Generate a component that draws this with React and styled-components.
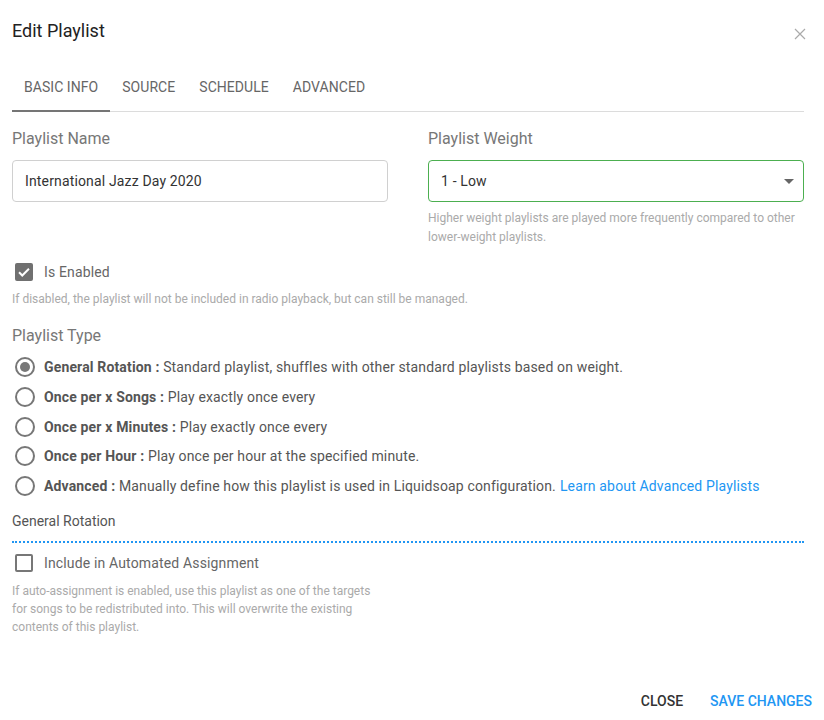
import React, { useState } from 'react';
import styled, { createGlobalStyle } from 'styled-components';

const GlobalStyle = createGlobalStyle`
  body {
    margin: 0;
    background: #fff;
    font-family: Roboto, "Liberation Sans", sans-serif;
    color: #555;
  }
  * { box-sizing: border-box; }
`;

const blue = '#2196f3';

const Dialog = styled.div`
  width: 824px;
  height: 720px;
  display: flex;
  flex-direction: column;
`;

const Header = styled.div`
  display: flex;
  justify-content: space-between;
  align-items: flex-start;
  padding: 20px 18px 0 12px;
  height: 64px;
`;

const Title = styled.h2`
  margin: 0;
  font-size: 18px;
  font-weight: 400;
  color: #222;
  line-height: 22px;
`;

const CloseX = styled.button`
  border: 0;
  background: none;
  padding: 0;
  margin-top: 8px;
  width: 12px;
  height: 12px;
  cursor: pointer;
  display: flex;
`;

const Body = styled.div`
  padding: 0 20px 0 12px;
  flex: 1;
`;

const Tabs = styled.div`
  display: flex;
  border-bottom: 1px solid #dcdcdc;
  height: 48px;
`;

const Tab = styled.div`
  padding: 0 12px;
  height: 48px;
  display: flex;
  align-items: center;
  font-size: 14px;
  color: #666;
  letter-spacing: 0.05px;
  border-bottom: 2px solid ${(p) => (p.active ? '#757575' : 'transparent')};
  margin-bottom: -1px;
`;

const Columns = styled.div`
  display: grid;
  grid-template-columns: 376px 376px;
  column-gap: 40px;
  margin-top: 17px;
`;

const Field = styled.div`
  display: flex;
  flex-direction: column;
`;

const Label = styled.div`
  font-size: 16px;
  color: #777;
  line-height: 20px;
  margin-bottom: ${(p) => p.gap || 11}px;
`;

const Box = styled.div`
  height: 42px;
  border: ${(p) => (p.focused ? '1.5px solid #4caf50' : '1px solid #d0d0d0')};
  border-radius: 4px;
  display: flex;
  align-items: center;
  justify-content: space-between;
  padding: 0 12px;
  font-size: 14px;
  letter-spacing: 0.15px;
  color: #333;
`;

const Caret = styled.span`
  width: 0;
  height: 0;
  border-left: 5px solid transparent;
  border-right: 5px solid transparent;
  border-top: 5px solid #666;
  margin-right: -3px;
`;

const Hint = styled.div`
  font-size: 12px;
  color: #aaa;
  line-height: ${(p) => p.lh || 19}px;
  margin-top: ${(p) => p.top || 6}px;
  max-width: ${(p) => (p.narrow ? '362px' : 'none')};
`;

const CheckRow = styled.label`
  display: flex;
  align-items: center;
  gap: 11px;
  padding-left: 3px;
  font-size: 14px;
  letter-spacing: 0.15px;
  color: #666;
  height: 20px;
  margin-top: ${(p) => p.top || 0}px;
`;

const CheckBox = styled.span`
  width: 18px;
  height: 18px;
  border-radius: 2px;
  display: flex;
  align-items: center;
  justify-content: center;
  background: ${(p) => (p.checked ? '#707070' : '#fff')};
  border: ${(p) => (p.checked ? 'none' : '2px solid #777')};
`;

const Section = styled.div`
  margin-top: 17px;
`;

const RadioList = styled.div`
  display: flex;
  flex-direction: column;
  gap: 9.75px;
`;

const RadioRow = styled.label`
  display: flex;
  align-items: center;
  gap: 9px;
  padding-left: 3px;
  font-size: 14px;
  letter-spacing: 0.15px;
  color: #555;
  height: 20px;
  white-space: nowrap;
`;

const RadioCircle = styled.span`
  width: 20px;
  height: 20px;
  border-radius: 50%;
  border: 2px solid #777;
  display: flex;
  align-items: center;
  justify-content: center;
  &::after {
    content: '';
    width: 10px;
    height: 10px;
    border-radius: 50%;
    background: #777;
    display: ${(p) => (p.checked ? 'block' : 'none')};
  }
`;

const Strong = styled.b`
  font-weight: 700;
  color: #555;
`;

const Link = styled.a`
  color: ${blue};
  text-decoration: none;
  margin-left: 4px;
`;

const SubHeading = styled.div`
  font-size: 14px;
  color: #555;
  margin-top: 17px;
  padding-bottom: 12px;
  border-bottom: 2px dotted ${blue};
`;

const Footer = styled.div`
  display: flex;
  justify-content: flex-end;
  gap: 11px;
  padding: 0 4px 1px 0;
`;

const ActionButton = styled.button`
  border: 0;
  background: none;
  font-family: inherit;
  font-size: 14px;
  font-weight: 500;
  text-transform: uppercase;
  color: ${(p) => (p.primary ? blue : '#333')};
  padding: 0 8px;
  height: 36px;
  cursor: pointer;
  letter-spacing: 0;
`;

const types = [
  { key: 'default', name: 'General Rotation', desc: 'Standard playlist, shuffles with other standard playlists based on weight.' },
  { key: 'songs', name: 'Once per x Songs', desc: 'Play exactly once every' },
  { key: 'minutes', name: 'Once per x Minutes', desc: 'Play exactly once every' },
  { key: 'hour', name: 'Once per Hour', desc: 'Play once per hour at the specified minute.' },
  { key: 'custom', name: 'Advanced', desc: 'Manually define how this playlist is used in Liquidsoap configuration.', link: 'Learn about Advanced Playlists' },
];

const Check = () => (
  <svg width="14" height="14" viewBox="0 0 24 24">
    <path d="M3.5 12.5l5.5 5.5L20.5 6.5" fill="none" stroke="#fff" strokeWidth="3.4" />
  </svg>
);

export default function App() {
  const [type, setType] = useState('default');
  const [enabled, setEnabled] = useState(true);
  const [auto, setAuto] = useState(false);

  return (
    <Dialog>
      <GlobalStyle />
      <Header>
        <Title>Edit Playlist</Title>
        <CloseX aria-label="close">
          <svg width="12" height="12" viewBox="0 0 12 12">
            <path d="M1 1l10 10M11 1L1 11" stroke="#aaa" strokeWidth="1.2" />
          </svg>
        </CloseX>
      </Header>
      <Body>
        <Tabs>
          <Tab active>BASIC INFO</Tab>
          <Tab>SOURCE</Tab>
          <Tab>SCHEDULE</Tab>
          <Tab>ADVANCED</Tab>
        </Tabs>

        <Columns>
          <Field>
            <Label>Playlist Name</Label>
            <Box>International Jazz Day 2020</Box>
          </Field>
          <Field>
            <Label>Playlist Weight</Label>
            <Box focused>
              1 - Low
              <Caret />
            </Box>
            <Hint top={7}>
              Higher weight playlists are played more frequently compared to other lower-weight playlists.
            </Hint>
          </Field>
        </Columns>

        <CheckRow top={15} onClick={() => setEnabled(!enabled)}>
          <CheckBox checked={enabled}>{enabled && <Check />}</CheckBox>
          Is Enabled
        </CheckRow>
        <Hint top={8}>If disabled, the playlist will not be included in radio playback, but can still be managed.</Hint>

        <Section>
          <Label gap={11}>Playlist Type</Label>
          <RadioList>
            {types.map((t) => (
              <RadioRow key={t.key} onClick={() => setType(t.key)}>
                <RadioCircle checked={type === t.key} />
                <span>
                  <Strong>{t.name} :</Strong> {t.desc}
                  {t.link && <Link href="#">{t.link}</Link>}
                </span>
              </RadioRow>
            ))}
          </RadioList>
        </Section>

        <SubHeading>General Rotation</SubHeading>

        <CheckRow top={10} onClick={() => setAuto(!auto)}>
          <CheckBox checked={auto}>{auto && <Check />}</CheckBox>
          Include in Automated Assignment
        </CheckRow>
        <Hint top={9} lh={18} narrow>
          If auto-assignment is enabled, use this playlist as one of the targets for songs to be redistributed into. This will overwrite the existing contents of this playlist.
        </Hint>
      </Body>
      <Footer>
        <ActionButton>Close</ActionButton>
        <ActionButton primary>Save Changes</ActionButton>
      </Footer>
    </Dialog>
  );
}
